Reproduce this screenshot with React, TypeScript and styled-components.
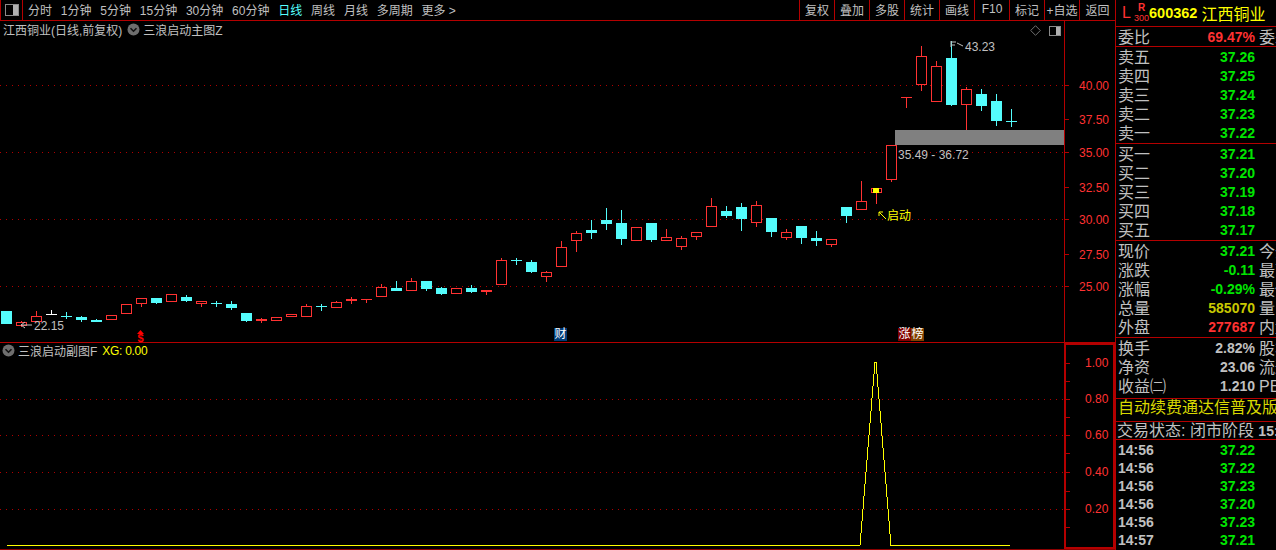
import React from "react";
import styled, { createGlobalStyle } from "styled-components";

const RED_LINE = "#b40000";
const RISE = "#ff3232";
const FALL = "#54fcfc";
const GREY = "#c0c0c0";

const GlobalStyle = createGlobalStyle`
  html, body {
    margin: 0;
    padding: 0;
    background: #000;
    overflow: hidden;
  }
  body {
    font-family: "Liberation Sans", "Noto Sans CJK SC", sans-serif;
  }
`;

// [bodyTop, bodyBottom, wickTop, wickBottom, kind]
type Candle = [number, number, number, number, "r" | "c" | "w"];

const candles: Candle[] = [
  [311, 323, 311, 323, "c"],
  [322, 325, 321, 326, "r"],
  [316, 321, 311, 321, "r"],
  [314, 314, 310, 314, "w"],
  [316, 316, 312, 318, "c"],
  [317, 319, 316, 321, "c"],
  [320, 321, 319, 321, "c"],
  [315, 319, 315, 319, "r"],
  [304, 313, 304, 313, "r"],
  [298, 303, 298, 306, "r"],
  [298, 302, 298, 303, "c"],
  [294, 301, 294, 301, "r"],
  [297, 300, 295, 301, "c"],
  [301, 303, 301, 306, "r"],
  [303, 303, 301, 306, "c"],
  [304, 307, 301, 309, "c"],
  [313, 320, 313, 321, "c"],
  [319, 320, 318, 322, "r"],
  [317, 320, 317, 320, "r"],
  [314, 316, 314, 316, "r"],
  [306, 316, 304, 316, "r"],
  [306, 306, 304, 310, "c"],
  [302, 307, 301, 307, "r"],
  [299, 300, 297, 303, "r"],
  [299, 299, 299, 302, "r"],
  [287, 296, 284, 296, "r"],
  [288, 290, 281, 290, "c"],
  [281, 290, 278, 290, "r"],
  [281, 288, 281, 290, "c"],
  [288, 293, 287, 294, "c"],
  [288, 293, 288, 293, "r"],
  [288, 291, 285, 292, "c"],
  [290, 291, 290, 294, "r"],
  [260, 284, 258, 284, "r"],
  [260, 260, 258, 264, "c"],
  [262, 271, 260, 272, "c"],
  [272, 276, 271, 281, "r"],
  [247, 266, 241, 266, "r"],
  [233, 240, 231, 251, "r"],
  [230, 232, 220, 238, "c"],
  [220, 223, 208, 229, "c"],
  [223, 238, 210, 244, "c"],
  [227, 240, 227, 240, "r"],
  [223, 239, 223, 241, "c"],
  [237, 240, 229, 240, "r"],
  [238, 246, 236, 249, "r"],
  [232, 236, 232, 239, "r"],
  [206, 226, 198, 226, "r"],
  [211, 215, 206, 217, "c"],
  [207, 218, 203, 230, "c"],
  [205, 222, 201, 226, "r"],
  [218, 231, 218, 236, "c"],
  [232, 237, 229, 239, "r"],
  [226, 237, 226, 243, "c"],
  [238, 240, 231, 245, "c"],
  [239, 244, 239, 246, "r"],
  [207, 215, 207, 222, "c"],
  [201, 209, 181, 209, "r"],
  [188, 192, 188, 203, "r"],
  [145, 179, 145, 181, "r"],
  [97, 97, 97, 107, "r"],
  [56, 84, 46, 90, "r"],
  [66, 101, 61, 101, "r"],
  [58, 104, 41, 105, "c"],
  [89, 104, 87, 129, "r"],
  [94, 105, 89, 110, "c"],
  [101, 120, 94, 125, "c"],
  [121, 121, 109, 126, "c"],
];

const candleColor = { r: RISE, c: FALL, w: "#ffffff" };

const priceTicks = [
  { y: 85, label: "40.00", dotted: true },
  { y: 119, label: "37.50", dotted: false },
  { y: 152, label: "35.00", dotted: true },
  { y: 187, label: "32.50", dotted: false },
  { y: 219, label: "30.00", dotted: true },
  { y: 254, label: "27.50", dotted: false },
  { y: 286, label: "25.00", dotted: true },
];

const subTicks = [
  { y: 363, label: "1.00", dotted: false },
  { y: 399, label: "0.80", dotted: true },
  { y: 435, label: "0.60", dotted: true },
  { y: 472, label: "0.40", dotted: true },
  { y: 509, label: "0.20", dotted: true },
];

const subMinor = [381, 417, 453, 491, 527];

const periods = ["分时", "1分钟", "5分钟", "15分钟", "30分钟", "60分钟", "日线", "周线", "月线", "多周期"];
const tools = ["复权", "叠加", "多股", "统计", "画线", "F10", "标记", "+自选", "返回"];

const sells = [
  ["卖五", "37.26"],
  ["卖四", "37.25"],
  ["卖三", "37.24"],
  ["卖二", "37.23"],
  ["卖一", "37.22"],
];
const buys = [
  ["买一", "37.21"],
  ["买二", "37.20"],
  ["买三", "37.19"],
  ["买四", "37.18"],
  ["买五", "37.17"],
];
const quotes = [
  { label: "现价", value: "37.21", tone: "#00e600", extra: "今开" },
  { label: "涨跌", value: "-0.11", tone: "#00e600", extra: "最高" },
  { label: "涨幅", value: "-0.29%", tone: "#00e600", extra: "最低" },
  { label: "总量", value: "585070", tone: "#c8c800", extra: "量比" },
  { label: "外盘", value: "277687", tone: RISE, extra: "内盘" },
];
const stats = [
  { label: "换手", value: "2.82%", extra: "股本" },
  { label: "净资", value: "23.06", extra: "流通" },
  { label: "收益㈡", value: "1.210", extra: "PE(动)" },
];
const ticks = [
  ["14:56", "37.22"],
  ["14:56", "37.22"],
  ["14:56", "37.23"],
  ["14:56", "37.20"],
  ["14:56", "37.23"],
  ["14:57", "37.21"],
];

const ChevronBadge = () => (
  <svg width="13" height="13" viewBox="0 0 13 13">
    <circle cx="6.5" cy="6.5" r="6" fill="#6e6e6e" />
    <path d="M3.5 5.2 L6.5 8.2 L9.5 5.2" fill="none" stroke="#111" strokeWidth="1.6" />
  </svg>
);

const PanelToggle = ({ size = 12 }: { size?: number }) => (
  <svg width={size} height={size - 2} viewBox="0 0 12 10" shapeRendering="crispEdges">
    <rect x="0.5" y="0.5" width="11" height="9" fill="none" stroke="#8a8a8a" />
    <rect x="7" y="1" width="4" height="8" fill="#b0b0b0" />
  </svg>
);

const PriceChart = () => (
  <ChartSvg width={1064} height={321} viewBox="0 21 1064 321">
    <g shapeRendering="crispEdges">
      {priceTicks
        .filter((t) => t.dotted)
        .map((t) => (
          <line key={t.y} x1="0" x2="1064" y1={t.y + 0.5} y2={t.y + 0.5} stroke="#b00000" strokeDasharray="1 5" />
        ))}
      <rect x="895" y="130" width="169" height="15" fill="#808080" />
      {candles.map(([top, bottom, wickTop, wickBottom, kind], i) => {
        const x = 6 + i * 15;
        const color = candleColor[kind];
        return (
          <g key={i}>
            <rect x={x} y={wickTop} width="1" height={wickBottom - wickTop + 1} fill={color} />
            {top === bottom ? (
              <rect x={x - 5} y={top} width="11" height="1" fill={color} />
            ) : kind === "c" ? (
              <rect x={x - 5} y={top} width="11" height={bottom - top + 1} fill={color} />
            ) : (
              <rect x={x - 4.5} y={top + 0.5} width="10" height={bottom - top} fill="#000" stroke={color} />
            )}
          </g>
        );
      })}
      <rect x="873" y="188" width="6" height="5" fill="#ffff00" />
    </g>
    <g fill="none" strokeWidth="1">
      <path d="M32 325 L21 325 M21 325 L25 322 M21 325 L25 328" stroke="#c0c0c0" />
      <path d="M951 41 L951 47 M951 42 L956 42 M951 45 L955 45 M957 43 L963 46" stroke="#c0c0c0" />
      <path d="M886 219 L879 212 M879 212 L879 216 M879 212 L883 212" stroke="#ffff00" />
    </g>
  </ChartSvg>
);

const IndicatorChart = () => (
  <ChartSvg width={1064} height={206} viewBox="0 343 1064 206">
    <g shapeRendering="crispEdges">
      {subTicks
        .filter((t) => t.dotted)
        .map((t) => (
          <line key={t.y} x1="0" x2="1064" y1={t.y + 0.5} y2={t.y + 0.5} stroke="#b00000" strokeDasharray="1 5" />
        ))}
      <path d="M7 545.5 L860 545.5 L875 362 L876 362 L891 545.5 L1010 545.5" fill="none" stroke="#ffff00" strokeWidth="1" />
    </g>
  </ChartSvg>
);

const App = () => (
  <>
    <GlobalStyle />
    <Screen>
      <LeftColumn>
        <Toolbar>
          <ToggleCell>
            <PanelToggle size={14} />
          </ToggleCell>
          <PeriodList>
            {periods.map((p) => (
              <PeriodItem key={p} $active={p === "日线"}>
                {p}
              </PeriodItem>
            ))}
            <PeriodItem>更多 &gt;</PeriodItem>
          </PeriodList>
          <ToolList>
            {tools.map((t) => (
              <ToolButton key={t}>{t}</ToolButton>
            ))}
          </ToolList>
        </Toolbar>

        <MainRow>
          <Pane>
            <PriceChart />
            <PaneTitle $left={3} $top={1}>
              <span>江西铜业(日线,前复权)</span>
              <ChevronBadge />
              <span>三浪启动主图Z</span>
            </PaneTitle>
            <PaneIcons>
              <svg width="11" height="11" viewBox="0 0 11 11">
                <path d="M5.5 0.7 L10.3 5.5 L5.5 10.3 L0.7 5.5 Z" fill="none" stroke="#707070" />
              </svg>
              <PanelToggle />
            </PaneIcons>
            <ChartNote $x={34} $y={319}>22.15</ChartNote>
            <ChartNote $x={965} $y={40}>43.23</ChartNote>
            <ChartNote $x={898} $y={148}>35.49 - 36.72</ChartNote>
            <ChartNote $x={887} $y={209} $yellow>启动</ChartNote>
            <DollarMark>
              <svg width="7" height="4" viewBox="0 0 7 4">
                <path d="M3.5 0 L7 4 L0 4 Z" fill="#ff0000" />
              </svg>
              <span>$</span>
            </DollarMark>
            <EventTag $x={554} $bg="#003c78">财</EventTag>
            <EventTag $x={898} $bg="#800000">涨</EventTag>
            <EventTag $x={911} $bg="#804000">榜</EventTag>
          </Pane>
          <PriceAxis>
            {priceTicks.map((t) => (
              <AxisTick key={t.y} $y={t.y - 21} $gap={10} $drop={2}>
                <i />
                <span>{t.label}</span>
              </AxisTick>
            ))}
          </PriceAxis>
        </MainRow>

        <SubRow>
          <Pane>
            <IndicatorChart />
            <PaneTitle $left={1} $top={0}>
              <ChevronBadge />
              <span>三浪启动副图F</span>
              <XgValue>XG: 0.00</XgValue>
            </PaneTitle>
          </Pane>
          <SubAxis>
            {subTicks.map((t) => (
              <AxisTick key={t.y} $y={t.y - 345} $gap={15}>
                <i />
                <span>{t.label}</span>
              </AxisTick>
            ))}
            {subMinor.map((y) => (
              <AxisTick key={y} $y={y - 345}>
                <i />
              </AxisTick>
            ))}
          </SubAxis>
        </SubRow>
      </LeftColumn>

      <SidePanel>
        <StockHeader>
          <LBadge>L</LBadge>
          <IndexBadge>
            <b>R</b>
            <span>300</span>
          </IndexBadge>
          <StockCode>600362</StockCode>
          <StockName>江西铜业</StockName>
        </StockHeader>

        <Section $height={20}>
          <QuoteRow>
            <Label>委比</Label>
            <Value $color={RISE}>69.47%</Value>
            <Extra>委差</Extra>
          </QuoteRow>
        </Section>

        <Section $height={97}>
          {sells.map(([l, v]) => (
            <QuoteRow key={l}>
              <Label>{l}</Label>
              <Value $color="#00e600">{v}</Value>
            </QuoteRow>
          ))}
        </Section>

        <Section $height={97}>
          {buys.map(([l, v]) => (
            <QuoteRow key={l}>
              <Label>{l}</Label>
              <Value $color="#00e600">{v}</Value>
            </QuoteRow>
          ))}
        </Section>

        <Section $height={97}>
          {quotes.map((q) => (
            <QuoteRow key={q.label}>
              <Label>{q.label}</Label>
              <Value $color={q.tone}>{q.value}</Value>
              <Extra>{q.extra}</Extra>
            </QuoteRow>
          ))}
        </Section>

        <Section $height={61}>
          {stats.map((s) => (
            <QuoteRow key={s.label}>
              <Label>{s.label}</Label>
              <Value $color={GREY}>{s.value}</Value>
              <Extra>{s.extra}</Extra>
            </QuoteRow>
          ))}
        </Section>

        <Section $height={23}>
          <AdText>自动续费通达信普及版</AdText>
        </Section>

        <Section $height={18}>
          <StatusText>
            交易状态: 闭市阶段 <b>15:00</b>
          </StatusText>
        </Section>

        <TickList>
          {ticks.map(([time, price], i) => (
            <TickRow key={i}>
              <TickTime>{time}</TickTime>
              <Value $color="#00e600">{price}</Value>
            </TickRow>
          ))}
        </TickList>
      </SidePanel>
    </Screen>
  </>
);

export default App;

const Screen = styled.div`
  display: flex;
  width: 1276px;
  height: 550px;
  overflow: hidden;
  background: #000;
`;
const LeftColumn = styled.div`
  display: flex;
  flex-direction: column;
  width: 1115px;
  height: 550px;
  flex: none;
  box-sizing: border-box;
  border-bottom: 1px solid #8b0000;
`;
const Toolbar = styled.div`
  display: flex;
  align-items: stretch;
  height: 20px;
  border-bottom: 1px solid ${RED_LINE};
  flex: none;
  font-size: 12px;
  color: ${GREY};
`;
const ToggleCell = styled.div`
  display: flex;
  align-items: center;
  justify-content: center;
  width: 23px;
  border-left: 1px solid ${RED_LINE};
  border-right: 1px solid ${RED_LINE};
  box-sizing: border-box;
  margin-right: 5px;
`;
const PeriodList = styled.div`
  display: flex;
  align-items: center;
  gap: 8.8px;
  flex: 1;
  padding-bottom: 2px;
`;
const PeriodItem = styled.span<{ $active?: boolean }>`
  color: ${(p) => (p.$active ? "#55ffff" : GREY)};
  white-space: nowrap;
`;
const ToolList = styled.div`
  display: flex;
  height: 20px;
  width: 316px;
  flex: none;
`;
const ToolButton = styled.div`
  display: flex;
  align-items: center;
  justify-content: center;
  width: 35px;
  box-sizing: border-box;
  border-left: 1px solid ${RED_LINE};
  padding-bottom: 2px;
  white-space: nowrap;
  &:last-child {
    width: 36px;
  }
`;
const MainRow = styled.div`
  display: flex;
  height: 321px;
  border-bottom: 1px solid ${RED_LINE};
  flex: none;
`;
const SubRow = styled.div`
  display: flex;
  flex: 1;
  min-height: 0;
`;
const Pane = styled.div`
  position: relative;
  width: 1064px;
  flex: none;
`;
const ChartSvg = styled.svg`
  display: block;
`;
const PaneTitle = styled.div<{ $left: number; $top: number }>`
  position: absolute;
  left: ${(p) => p.$left}px;
  top: ${(p) => p.$top}px;
  display: flex;
  align-items: center;
  gap: 4px;
  height: 15px;
  font-size: 12px;
  color: ${GREY};
  white-space: nowrap;
  svg {
    flex: none;
    margin: 0 -1px 0 1px;
  }
`;
const XgValue = styled.span`
  color: #ffff00;
  margin-left: 1px;
  letter-spacing: -0.3px;
`;
const PaneIcons = styled.div`
  position: absolute;
  right: 3px;
  top: 4px;
  display: flex;
  align-items: center;
  gap: 8px;
`;
const ChartNote = styled.span<{ $x: number; $y: number; $yellow?: boolean }>`
  position: absolute;
  left: ${(p) => p.$x}px;
  top: ${(p) => p.$y - 21}px;
  font-size: 12px;
  line-height: 14px;
  color: ${(p) => (p.$yellow ? "#ffff00" : GREY)};
  white-space: nowrap;
`;
const DollarMark = styled.div`
  position: absolute;
  left: 136px;
  top: 309px;
  width: 9px;
  display: flex;
  flex-direction: column;
  align-items: center;
  color: #ff0000;
  font-size: 11px;
  font-weight: 700;
  line-height: 8px;
  svg {
    display: block;
  }
`;
const EventTag = styled.span<{ $x: number; $bg: string }>`
  position: absolute;
  left: ${(p) => p.$x}px;
  top: 307px;
  width: 13px;
  height: 13px;
  background: ${(p) => p.$bg};
  color: #fff;
  font-size: 12px;
  line-height: 13px;
  text-align: center;
`;
const PriceAxis = styled.div`
  position: relative;
  width: 51px;
  border-left: 1px solid ${RED_LINE};
  box-sizing: border-box;
`;
const SubAxis = styled.div`
  position: relative;
  width: 51px;
  height: 206px;
  border: 2px solid ${RED_LINE};
  box-sizing: border-box;
`;
const AxisTick = styled.div<{ $y: number; $gap?: number; $drop?: number }>`
  position: absolute;
  left: 0;
  top: ${(p) => p.$y - 7}px;
  height: 14px;
  display: flex;
  align-items: center;
  gap: ${(p) => p.$gap ?? 7}px;
  color: ${RISE};
  font-size: 12px;
  i {
    display: block;
    width: 4px;
    height: 1px;
    background: ${RED_LINE};
  }
  span {
    margin-top: ${(p) => p.$drop ?? 0}px;
  }
`;
const SidePanel = styled.div`
  display: flex;
  flex-direction: column;
  width: 161px;
  height: 550px;
  flex: none;
  box-sizing: border-box;
  border-left: 1px solid ${RED_LINE};
  overflow: hidden;
  color: ${GREY};
`;
const StockHeader = styled.div`
  display: flex;
  align-items: center;
  height: 27px;
  flex: none;
  box-sizing: border-box;
  border-bottom: 1px solid ${RED_LINE};
  padding-left: 6px;
  white-space: nowrap;
`;
const LBadge = styled.span`
  color: ${RISE};
  font-size: 16px;
  width: 12px;
`;
const IndexBadge = styled.span`
  display: flex;
  flex-direction: column;
  align-items: center;
  width: 15px;
  color: ${RISE};
  font-size: 9px;
  line-height: 10px;
  b {
    font-size: 10px;
    line-height: 10px;
  }
`;
const StockCode = styled.span`
  color: #ffff00;
  font-size: 14.5px;
  font-weight: 700;
  margin-right: 4px;
`;
const StockName = styled.span`
  color: #ffff00;
  font-size: 16px;
`;
const Section = styled.div<{ $height: number }>`
  display: flex;
  flex-direction: column;
  height: ${(p) => p.$height}px;
  flex: none;
  box-sizing: border-box;
  border-bottom: 1px solid ${RED_LINE};
  overflow: hidden;
`;
const QuoteRow = styled.div`
  display: flex;
  align-items: center;
  height: 19px;
  flex: none;
  padding-left: 2px;
  white-space: nowrap;
`;
const Label = styled.span`
  width: 70px;
  flex: none;
  font-size: 16px;
  padding-bottom: 2px;
`;
const Value = styled.span<{ $color: string }>`
  width: 67px;
  flex: none;
  text-align: right;
  color: ${(p) => p.$color};
  font-size: 14px;
  font-weight: 700;
`;
const Extra = styled.span`
  margin-left: 4px;
  font-size: 16px;
  padding-bottom: 2px;
`;
const AdText = styled.div`
  color: #d8d800;
  font-size: 16px;
  line-height: 18px;
  padding-left: 2px;
  white-space: nowrap;
`;
const StatusText = styled.div`
  font-size: 16px;
  line-height: 17px;
  padding-left: 1px;
  white-space: nowrap;
  b {
    font-size: 14px;
  }
`;
const TickList = styled.div`
  display: flex;
  flex-direction: column;
  padding-top: 1px;
`;
const TickRow = styled.div`
  display: flex;
  align-items: center;
  height: 18px;
  padding-left: 2px;
`;
const TickTime = styled.span`
  width: 70px;
  flex: none;
  font-size: 14px;
  font-weight: 700;
`;
